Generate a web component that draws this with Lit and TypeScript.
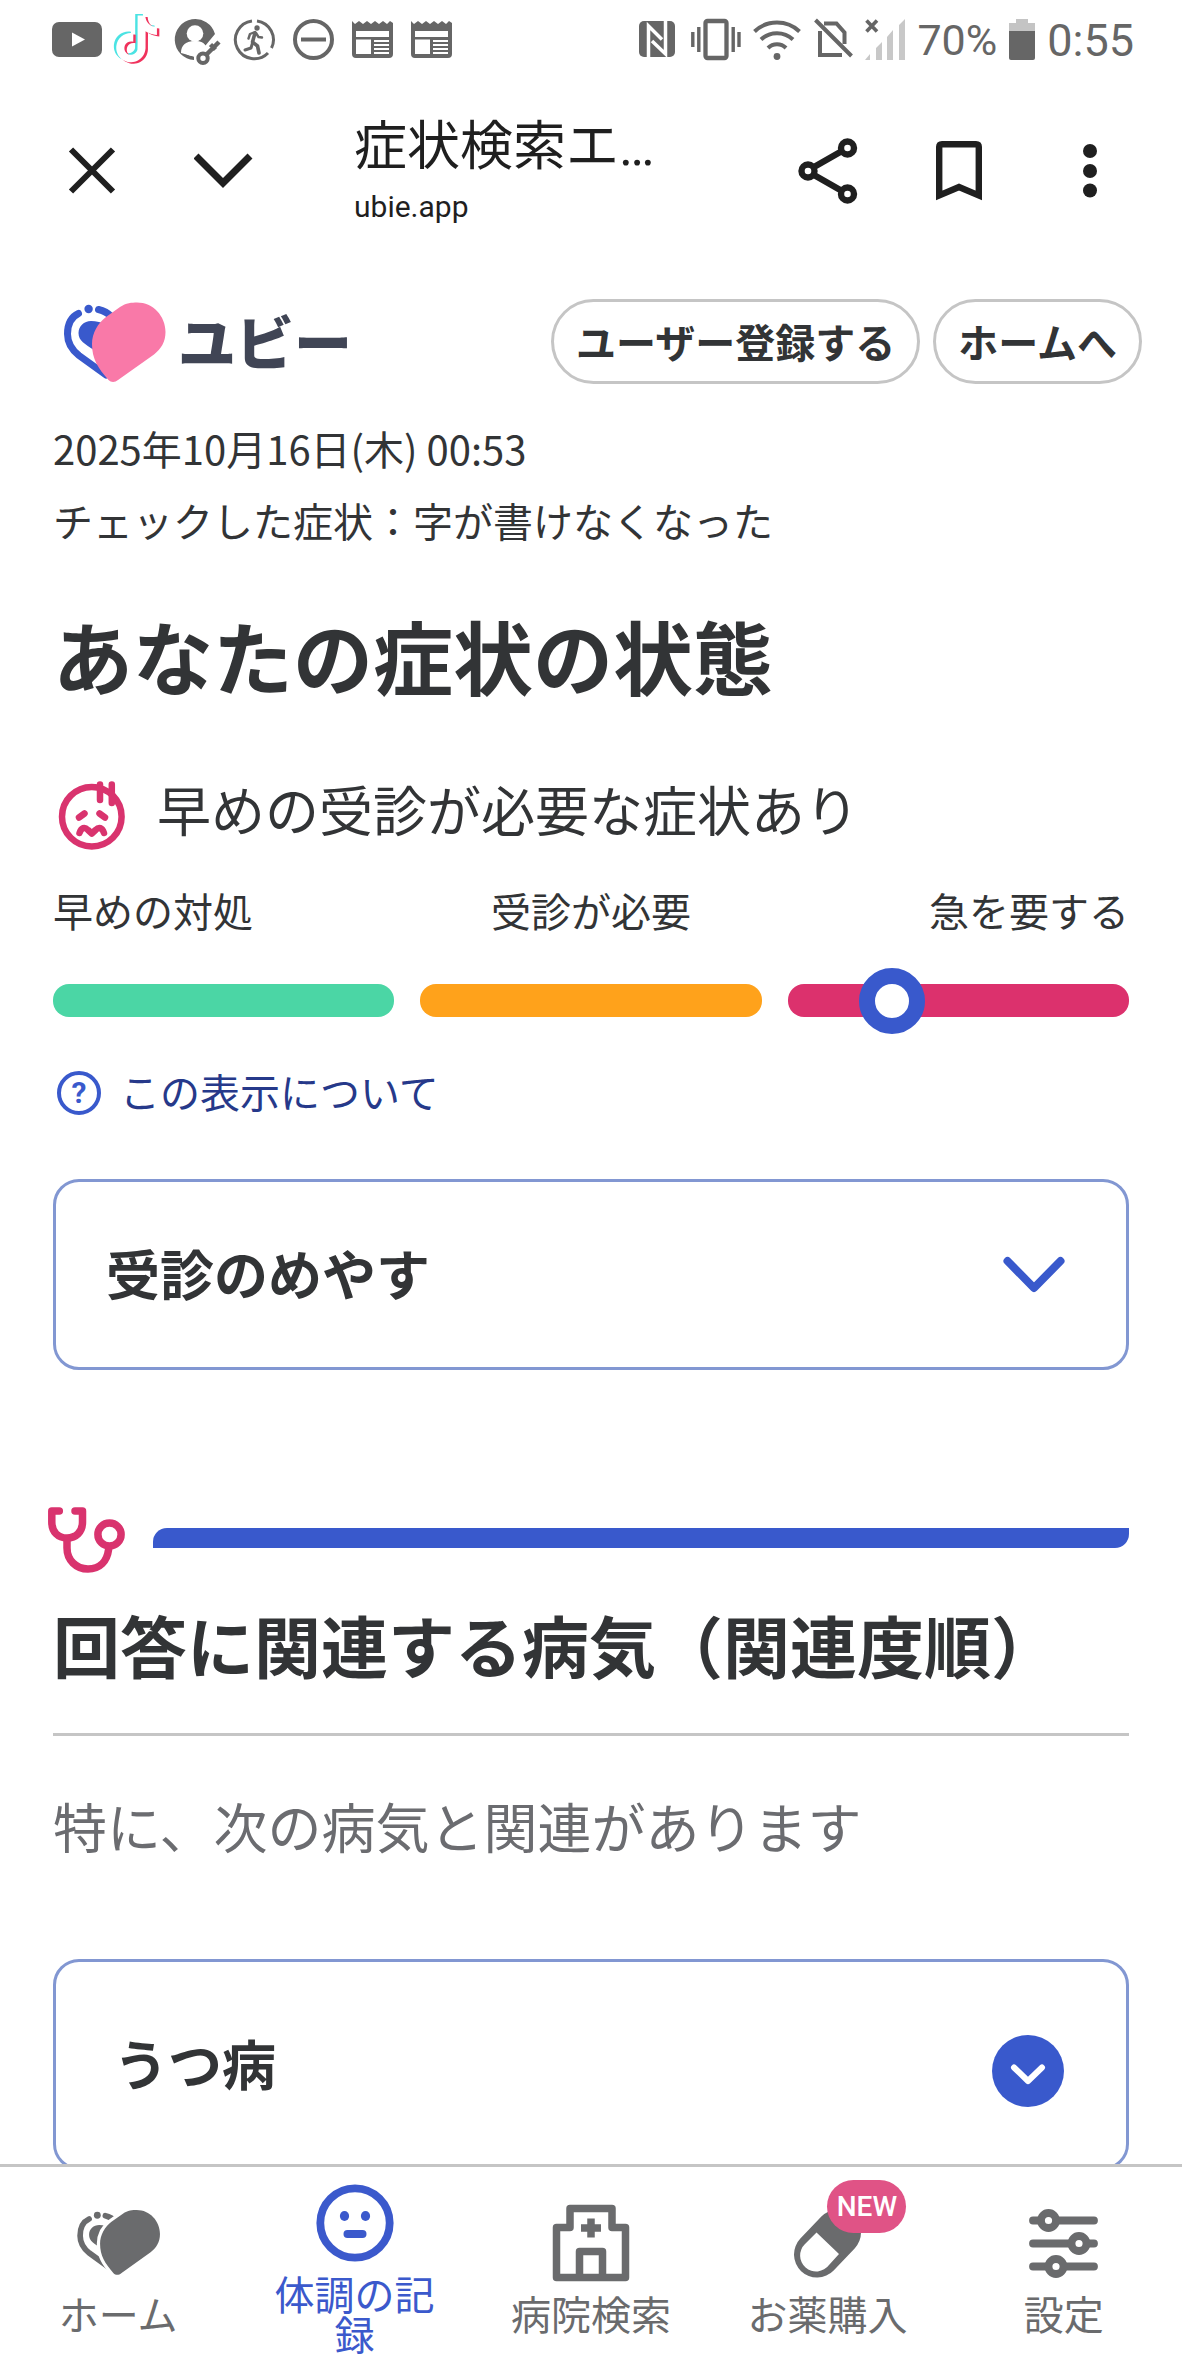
import { LitElement, html, css, svg } from "lit";
import { customElement } from "lit/decorators.js";
import { classMap } from "lit/directives/class-map.js";

const GREY = "#666666";

/* ---------- status bar icons ---------- */

const youtube = html`<svg class="tray" viewBox="0 0 59 56" aria-hidden="true">
  <rect x="4" y="10" width="50" height="35" rx="7" fill=${GREY} />
  <path d="M24 20.500L37 27.500L24 34.500Z" fill="#fff" />
</svg>`;

const notePath =
  "M12.525.02c1.31-.02 2.61-.01 3.91-.02.08 1.53.63 3.09 1.75 4.17 1.12 1.11 2.7 1.62 4.24 1.79v4.03c-1.44-.05-2.89-.35-4.2-.97-.57-.26-1.1-.59-1.62-.93-.01 2.92.01 5.84-.02 8.75-.08 1.4-.54 2.79-1.35 3.94-1.31 1.92-3.58 3.17-5.91 3.21-1.43.08-2.86-.31-4.08-1.03-2.02-1.19-3.44-3.37-3.65-5.71-.02-.5-.03-1-.01-1.49.18-1.9 1.12-3.72 2.58-4.96 1.66-1.44 3.98-2.13 6.15-1.72.02 1.48-.04 2.96-.04 4.44-.99-.32-2.15-.23-3.02.37-.63.41-1.11 1.04-1.36 1.75-.21.51-.15 1.07-.14 1.61.24 1.64 1.82 3.02 3.5 2.87 1.12-.01 2.19-.66 2.77-1.61.19-.33.4-.67.41-1.06.1-1.79.06-3.57.07-5.36.01-4.03-.01-8.05.02-12.07z";

const tiktok = html`<svg class="tray" viewBox="0 0 59 56" aria-hidden="true">
  <path d=${notePath} transform="translate(3.800 2) scale(1.950)" fill="#4be3e3" />
  <path d=${notePath} transform="translate(8.600 5) scale(1.950)" fill="#f0325c" />
  <path d=${notePath} transform="translate(6.200 3.500) scale(1.950)" fill="#fff" />
</svg>`;

const accountKey = html`<svg class="tray" viewBox="0 0 59 56" aria-hidden="true">
  <path d="M49 22A20.500 20.500 0 1 0 28 48V44.500L15 41C15 33 20 29 29 29C34 29 37 30 39.500 33.500Z" fill=${GREY} />
  <path d="M17 39C18 32 22 29.500 29 29.500C36 29.500 39 32 40 36L32 44L28 44.500C23 44 19 42 17 39Z" fill="#fff" />
  <circle cx="29" cy="21.500" r="8.300" fill="#fff" />
  <circle cx="37" cy="46.300" r="4.700" fill="none" stroke=${GREY} stroke-width="4" />
  <path d="M40.500 42.500L53 30M44.500 32.500L49.500 37.500" fill="none" stroke=${GREY} stroke-width="4.500" />
</svg>`;

const runner = html`<svg class="tray" viewBox="0 0 59 56" aria-hidden="true">
  <g fill="none" stroke=${GREY} stroke-width="3">
    <path d="M32 8.900A19 19 0 0 1 46.500 36M43 41A19 19 0 1 1 27 8.900" />
    <g stroke-linecap="round" stroke-linejoin="round">
      <path d="M30 21L27.500 30L32.500 34L34 41" stroke-width="3.600" />
      <path d="M27.500 31L26 36L20 38" />
      <path d="M30 20L25 22L23.500 26.500M31 21L33.500 25L37 25.500" stroke-width="2.400" />
    </g>
  </g>
  <circle cx="32" cy="16" r="2.700" fill=${GREY} />
</svg>`;

const minusCircle = html`<svg class="tray" viewBox="0 0 59 56" aria-hidden="true">
  <circle cx="29.500" cy="27.500" r="18.500" fill="none" stroke=${GREY} stroke-width="4" />
  <rect x="17" y="25.500" width="25" height="4" fill=${GREY} />
</svg>`;

const newspaper = html`<svg class="tray" viewBox="0 0 59 56" aria-hidden="true">
  <path d="M9 9L12 12L16 9L20 12L24 9L28 12L32 9L36 12L40 9L44 12L47 9L50 11V42Q50 46 46 46H13Q9 46 9 42Z" fill=${GREY} />
  <path d="M13 19H46V25H13ZM13 27.500H28V42H13Z" fill="#fff" />
  <path d="M31 29H46M31 33H46M31 37H46M31 41H46" stroke="#fff" stroke-width="2" />
</svg>`;

const nfc = html`<svg width="40" height="56" viewBox="0 0 40 56" aria-hidden="true">
  <rect x="2" y="9" width="36" height="36" rx="5" fill=${GREY} />
  <path d="M11.500 46V14L25 27.500M28.500 8V42L15 29" fill="none" stroke="#fff" stroke-width="3.500" />
</svg>`;

const vibrate = html`<svg width="52" height="56" viewBox="0 0 52 56" aria-hidden="true">
  <rect x="16.500" y="9" width="21" height="37" rx="2" fill="none" stroke=${GREY} stroke-width="4.300" />
  <path d="M3.800 20V35M9.800 15V40M44.200 15V40M50 20V35" stroke=${GREY} stroke-width="3.400" />
</svg>`;

const wifi = html`<svg width="48" height="56" viewBox="0 0 48 56" aria-hidden="true">
  <g fill="none" stroke=${GREY} stroke-width="4">
    <path d="M1.500 19.500C14 7.500 34 7.500 46.500 19.500" />
    <path d="M8 27.500C17 19 31 19 40 27.500" />
    <path d="M15 36C20 31 28 31 33 36" />
  </g>
  <circle cx="24" cy="44.500" r="3.400" fill=${GREY} />
</svg>`;

const noSim = html`<svg width="40" height="56" viewBox="0 0 40 56" aria-hidden="true">
  <path d="M11 11.500H23.500L31.500 20.500V32M7 19V43H29M2.500 8L38.500 44" fill="none" stroke=${GREY} stroke-width="4" />
</svg>`;

const signal = html`<svg width="40" height="56" viewBox="0 0 40 56" aria-hidden="true">
  <path d="M0 48L5 42V48ZM11 48V36L17 30V48ZM22 48V25L28 18V48ZM34 48V13L40 7V48Z" fill="#c8c8c8" />
  <path d="M1.500 8.500L12 19.500M12 8.500L1.500 19.500" stroke=${GREY} stroke-width="3.600" />
</svg>`;

const battery = html`<svg width="26" height="56" viewBox="0 0 26 56" aria-hidden="true">
  <path d="M7 7H19V11H26V20H0V11H7Z" fill="#c4c4c4" />
  <path d="M0 19H26V46Q26 48 24 48H2Q0 48 0 46Z" fill=${GREY} />
</svg>`;

/* ---------- browser toolbar icons ---------- */

const closeIcon = html`<svg width="60" height="60" viewBox="0 0 60 60" aria-hidden="true">
  <path d="M8 8.500L50 50.500M50 8.500L8 50.500" stroke="#1f1f1f" stroke-width="6" />
</svg>`;

const collapseIcon = html`<svg width="60" height="60" viewBox="0 0 60 60" aria-hidden="true">
  <path d="M2 15L29 42L56 15" fill="none" stroke="#1f1f1f" stroke-width="7" />
</svg>`;

const shareIcon = html`<svg width="64" height="70" viewBox="0 0 64 70" aria-hidden="true">
  <g fill="none" stroke="#1f1f1f" stroke-width="6.400">
    <path d="M18 31L46 15M18 39L46 55" />
    <circle cx="51.500" cy="12" r="6.500" />
    <circle cx="51.500" cy="58" r="6.500" />
    <circle cx="12" cy="35" r="6.500" />
  </g>
</svg>`;

const bookmarkIcon = html`<svg width="64" height="70" viewBox="0 0 64 70" aria-hidden="true">
  <path d="M12.200 59.500V11Q12.200 8.200 15 8.200H49Q51.800 8.200 51.800 11V59.500L32 51Z" fill="none" stroke="#1f1f1f" stroke-width="6.400" />
</svg>`;

const moreIcon = html`<svg width="64" height="70" viewBox="0 0 64 70" aria-hidden="true">
  <g fill="#1f1f1f">
    <circle cx="32" cy="15" r="7" />
    <circle cx="32" cy="35" r="7" />
    <circle cx="32" cy="54.500" r="7" />
  </g>
</svg>`;

/* ---------- page icons ---------- */

// The brand heart: a solid leaf laid over an outlined one.
const heart = (back: string, front: string, halo: number) => svg`
  <path d="M18.500 14.500C11 18 7.500 26 7.500 35C7.500 45 12 51 19 56.500L46 76"
    fill="none" stroke=${back} stroke-width="7" stroke-linecap="round" />
  <circle cx="28.600" cy="10" r="4.200" fill=${back} />
  <path d="M38.500 10.500C43 11.500 48 14 52 18" fill="none" stroke=${back} stroke-width="7" stroke-linecap="round" />
  <path d="M31 22C24 22 18.500 27 18.500 34C18.500 42 25 45 34 51L46 26C42 23 36 22 31 22Z" fill=${back} />
  <path d="M60 8C66 4 72 3.500 77 3.500C93 3.500 105.500 17 105.500 33C105.500 43 101 50 94 55.500L58 81C55 83.500 51 83.500 48.500 81C38 69 32 60 32 45C32 34 38 24 46 18Z"
    fill=${front} stroke="#fff" stroke-width=${halo} paint-order="stroke" />`;

const distressedFace = html`<svg width="80" height="80" viewBox="0 0 80 80" aria-hidden="true">
  <g fill="none" stroke="#d9336e" stroke-width="6.500" stroke-linecap="round">
    <circle cx="38.800" cy="45.700" r="29.800" />
    <path d="M47 13.500V29M58.800 13.500V32" />
    <path d="M26 46.500L31.500 42.500M46.500 42.500L52 46.500" />
    <path d="M26.500 62C28.500 56.500 31.500 55.500 35 59L38.800 62.500L42.600 59C46 55.500 49 56.500 51 62" stroke-linejoin="round" />
  </g>
</svg>`;

const stethoscope = html`<svg class="stethoscope" width="88" height="80" viewBox="0 0 88 80" aria-hidden="true">
  <g fill="none" stroke="#d9336e" stroke-width="7.500" stroke-linecap="round" stroke-linejoin="round">
    <path d="M16.300 13H8.800V24C8.800 34 15 40 24 40S39.500 34 39.500 24V13H32" />
    <path d="M24 41V50C24 62 33 71 45 71S64 63 65.500 52" />
    <circle cx="66.500" cy="36.500" r="11.600" />
  </g>
</svg>`;

const chevron = html`<svg width="66" height="48" viewBox="0 0 66 48" aria-hidden="true">
  <path d="M6.500 10L33 37L59.500 10" fill="none" stroke="#3959cc" stroke-width="8" stroke-linecap="round" stroke-linejoin="round" />
</svg>`;

const roundChevron = html`<svg class="disc" width="72" height="72" viewBox="0 0 72 72" aria-hidden="true">
  <circle cx="36" cy="36" r="36" fill="#3959cc" />
  <path d="M22 32.500L36 46L50 32.500" fill="none" stroke="#fff" stroke-width="6" stroke-linecap="round" stroke-linejoin="round" />
</svg>`;

/* ---------- navigation icons ---------- */

const NAV_GREY = "#6a6b6d";

const navHome = html`<svg width="88" height="80" viewBox="0 -5 108 98" aria-hidden="true">
  ${heart(NAV_GREY, NAV_GREY, 8)}
</svg>`;

const navFace = html`<svg width="80" height="80" viewBox="0 0 80 80" aria-hidden="true">
  <circle cx="40" cy="40" r="34.700" fill="none" stroke="#3b59cc" stroke-width="7.800" />
  <ellipse cx="29.500" cy="33" rx="4.600" ry="5" fill="#3b59cc" />
  <ellipse cx="50.500" cy="33" rx="4.600" ry="5" fill="#3b59cc" />
  <path d="M32.500 51H47.500" stroke="#3b59cc" stroke-width="8" stroke-linecap="round" />
</svg>`;

const navHospital = html`<svg width="80" height="80" viewBox="0 0 80 80" aria-hidden="true">
  <g fill="none" stroke=${NAV_GREY} stroke-width="7.500" stroke-linejoin="round">
    <path d="M5.500 74.500V24.500H19V5.500H61V24.500H74.500V74.500Z" />
    <path d="M28.500 74V48.500H51.500V74" />
    <path d="M30 25H50M40 15.500V34.500" />
  </g>
</svg>`;

const navPill = html`<svg width="80" height="80" viewBox="0 0 80 80" aria-hidden="true">
  <path d="M30 51.500L51 29.500" stroke=${NAV_GREY} stroke-width="46" stroke-linecap="round" />
  <path d="M29.500 29.500L52 51L42 62A16 16 0 1 1 18 41Z" fill="#fff" />
</svg>`;

const navSettings = html`<svg width="80" height="80" viewBox="0 0 80 80" aria-hidden="true">
  <g fill="none" stroke=${NAV_GREY} stroke-width="7.800" stroke-linecap="round">
    <path d="M9 17.500H70M9 40.500H70M9 63.500H70" />
    <circle cx="24.500" cy="17.500" r="7.500" fill="#fff" />
    <circle cx="55" cy="40.500" r="7.500" fill="#fff" />
    <circle cx="32" cy="63.500" r="7.500" fill="#fff" />
  </g>
</svg>`;

@customElement("status-bar")
class StatusBar extends LitElement {
  static styles = css`
    :host {
      display: flex;
      justify-content: space-between;
      align-items: center;
      height: 80px;
      padding: 0 48px;
      color: #666;
      font-family: Roboto, sans-serif;
    }
    .group {
      display: flex;
      align-items: center;
    }
    .right {
      gap: 12px;
    }
    .tray {
      width: 59px;
      height: 56px;
    }
    svg {
      display: block;
      flex: none;
    }
    .percent {
      font-size: 43px;
    }
    .time {
      font-size: 45px;
    }
  `;

  render() {
    return html`
      <div class="group">
        ${youtube}${tiktok}${accountKey}${runner}${minusCircle}${newspaper}${newspaper}
      </div>
      <div class="group right">
        ${nfc}${vibrate}${wifi}${noSim}${signal}
        <span class="percent">70%</span>
        ${battery}
        <span class="time">0:55</span>
      </div>
    `;
  }
}

@customElement("browser-bar")
class BrowserBar extends LitElement {
  static styles = css`
    :host {
      display: flex;
      align-items: center;
      height: 182px;
      padding: 0 27px;
      color: #1f1f1f;
    }
    .tool {
      display: flex;
      align-items: center;
      justify-content: center;
      flex: none;
      width: 131px;
      height: 131px;
      padding: 0;
      border: 0;
      background: none;
    }
    .site {
      flex: 1;
      min-width: 0;
      padding-left: 65px;
    }
    .title {
      font: 400 53px / 72px Roboto, "Noto Sans CJK JP", sans-serif;
      white-space: nowrap;
    }
    .host {
      font: 400 30px / 48px Roboto, sans-serif;
    }
  `;

  render() {
    return html`
      <button class="tool" aria-label="閉じる">${closeIcon}</button>
      <button class="tool" aria-label="最小化">${collapseIcon}</button>
      <div class="site">
        <div class="title">症状検索エ…</div>
        <div class="host">ubie.app</div>
      </div>
      <button class="tool" aria-label="共有">${shareIcon}</button>
      <button class="tool" aria-label="ブックマーク">${bookmarkIcon}</button>
      <button class="tool" aria-label="メニュー">${moreIcon}</button>
    `;
  }
}

@customElement("severity-gauge")
class SeverityGauge extends LitElement {
  static styles = css`
    :host {
      display: block;
    }
    .labels {
      display: flex;
      justify-content: space-between;
      font-size: 40px;
      line-height: 56px;
    }
    .track {
      position: relative;
      display: grid;
      grid-template-columns: repeat(3, 1fr);
      gap: 26px;
      margin-top: 46px;
    }
    .segment {
      height: 33px;
      border-radius: 16px;
    }
    .low {
      background: #4bd6a5;
    }
    .mid {
      background: #ffa21b;
    }
    .high {
      background: #dc316d;
    }
    .marker {
      position: absolute;
      top: 50%;
      box-sizing: border-box;
      width: 66px;
      height: 66px;
      border: 16px solid #3959cc;
      border-radius: 50%;
      background: #fff;
      transform: translate(-50%, -50%);
    }
  `;

  private value = 78;

  render() {
    return html`
      <div class="labels">
        <span>早めの対処</span><span>受診が必要</span><span>急を要する</span>
      </div>
      <div class="track">
        <div class="segment low"></div>
        <div class="segment mid"></div>
        <div class="segment high"></div>
        <div class="marker" style="left: ${this.value}%"></div>
      </div>
    `;
  }
}

interface NavItem {
  label: string;
  icon: unknown;
  active?: boolean;
  badge?: string;
}

@customElement("bottom-nav")
class BottomNav extends LitElement {
  static styles = css`
    :host {
      display: block;
      flex: none;
      border-top: 3px solid #c5c5c5;
      background: #fff;
    }
    .items {
      display: grid;
      grid-template-columns: repeat(5, 1fr);
      height: 197px;
    }
    .item {
      display: flex;
      flex-direction: column;
      align-items: center;
      justify-content: center;
      gap: 10px;
      padding: 4px 30px 0;
      color: #6a6b6d;
      font-size: 40px;
      line-height: 40px;
      text-align: center;
      text-decoration: none;
    }
    .active {
      color: #3b59cc;
    }
    .icon {
      position: relative;
      display: flex;
    }
    .badge {
      position: absolute;
      left: 40px;
      top: -23px;
      width: 79px;
      border-radius: 27px;
      background: #e05386;
      color: #fff;
      font: 500 28px / 53px Roboto, sans-serif;
    }
  `;

  private items: NavItem[] = [
    { label: "ホーム", icon: navHome },
    { label: "体調の記録", icon: navFace, active: true },
    { label: "病院検索", icon: navHospital },
    { label: "お薬購入", icon: navPill, badge: "NEW" },
    { label: "設定", icon: navSettings },
  ];

  render() {
    return html`<nav class="items">
      ${this.items.map(
        (item) => html`<a href="#" class=${classMap({ item: true, active: !!item.active })}>
          <span class="icon">${item.icon}${item.badge ? html`<span class="badge">${item.badge}</span>` : ""}</span>
          <span>${item.label}</span>
        </a>`
      )}
    </nav>`;
  }
}

@customElement("app-root")
class AppRoot extends LitElement {
  static styles = css`
    :host {
      display: flex;
      flex-direction: column;
      height: 100vh;
      overflow: hidden;
      background: #fff;
      color: #323436;
      font-family: "Noto Sans CJK JP", sans-serif;
    }
    status-bar,
    browser-bar {
      flex: none;
    }
    svg {
      display: block;
      flex: none;
    }
    .scroll {
      flex: 1;
      min-height: 0;
      overflow-y: auto;
      scrollbar-width: none;
    }
    .header {
      display: flex;
      align-items: center;
      gap: 13px;
      padding: 37px 40px 0 60px;
    }
    .brand {
      display: flex;
      align-items: center;
      gap: 8px;
      height: 85px;
      margin-right: auto;
      color: #404555;
      font-size: 58px;
      font-weight: 900;
      line-height: 80px;
      text-decoration: none;
    }
    .brand span {
      padding-bottom: 4px;
    }
    .pill {
      flex: none;
      height: 85px;
      padding: 0 22px 2px;
      border: 3px solid #c5c5c5;
      border-radius: 43px;
      background: #fff;
      color: inherit;
      font: 700 40px / 60px "Noto Sans CJK JP", sans-serif;
    }
    .content {
      padding: 28px 53px 60px;
    }
    .meta {
      margin: 0;
      font-size: 40px;
      line-height: 72px;
    }
    .title {
      margin: 50px 0 69px;
      font-size: 80px;
      font-weight: 700;
      line-height: 96px;
    }
    .verdict {
      display: flex;
      align-items: center;
      gap: 24px;
      margin: 0 0 31px;
      font-size: 54px;
      font-weight: 400;
      line-height: 76px;
    }
    .verdict span {
      padding-bottom: 4px;
    }
    .about {
      display: inline-flex;
      align-items: center;
      gap: 19px;
      margin-top: 52px;
      padding-left: 4px;
      color: #26398a;
      font-size: 40px;
      line-height: 44px;
      text-decoration: none;
    }
    .about .text {
      padding-bottom: 4px;
    }
    .question {
      box-sizing: border-box;
      width: 44px;
      height: 44px;
      border: 4px solid #3959cc;
      border-radius: 50%;
      color: #3959cc;
      font: 700 30px / 36px Roboto, sans-serif;
      text-align: center;
    }
    .card {
      display: flex;
      align-items: center;
      justify-content: space-between;
      width: 100%;
      border: 3px solid #8297d2;
      border-radius: 26px;
      background: #fff;
      color: inherit;
      font: 700 54px / 76px "Noto Sans CJK JP", sans-serif;
      text-align: left;
    }
    .card span {
      padding-bottom: 4px;
    }
    .guide {
      height: 191px;
      margin-top: 62px;
      padding: 0 59px 0 50px;
    }
    .disease {
      height: 211px;
      padding: 0 62px 0 58px;
    }
    .disc {
      margin-top: 12px;
    }
    .rule {
      display: flex;
      align-items: center;
      gap: 22px;
      margin-top: 128px;
    }
    .stethoscope {
      margin-left: -10px;
    }
    .bar {
      flex: 1;
      height: 20px;
      border-radius: 14px 0 14px 0;
      background: #3959cc;
    }
    .subtitle {
      margin: 26px 0 58px;
      padding-bottom: 49px;
      border-bottom: 3px solid #c5c5c5;
      font-size: 67px;
      font-weight: 700;
      line-height: 80px;
    }
    .lead {
      margin: 0 0 101px;
      color: #6b6c70;
      font-size: 54px;
      line-height: 64px;
    }
  `;

  render() {
    return html`
      <status-bar></status-bar>
      <browser-bar></browser-bar>
      <div class="scroll">
        <header class="header">
          <a class="brand" href="#">
            <svg width="110" height="85" viewBox="0 0 110 85" aria-hidden="true">
              ${heart("#3959cc", "#f979a8", 0)}
            </svg>
            <span>ユビー</span>
          </a>
          <button class="pill">ユーザー登録する</button>
          <button class="pill">ホームへ</button>
        </header>
        <main class="content">
          <p class="meta">2025年10月16日(木) 00:53</p>
          <p class="meta">チェックした症状：字が書けなくなった</p>
          <h1 class="title">あなたの症状の状態</h1>
          <h2 class="verdict">${distressedFace}<span>早めの受診が必要な症状あり</span></h2>
          <severity-gauge></severity-gauge>
          <a class="about" href="#">
            <span class="question">?</span><span class="text">この表示について</span>
          </a>
          <button class="card guide" aria-expanded="false"><span>受診のめやす</span>${chevron}</button>
          <div class="rule">${stethoscope}<div class="bar"></div></div>
          <h2 class="subtitle">回答に関連する病気（関連度順）</h2>
          <p class="lead">特に、次の病気と関連があります</p>
          <button class="card disease" aria-expanded="false"><span>うつ病</span>${roundChevron}</button>
        </main>
      </div>
      <bottom-nav></bottom-nav>
    `;
  }
}
